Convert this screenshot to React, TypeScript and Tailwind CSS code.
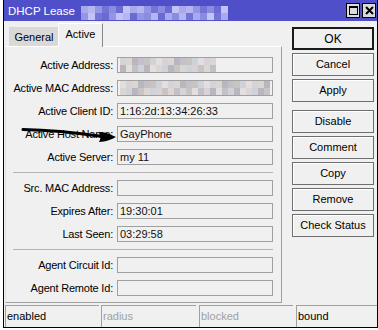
import React from "react";

const titleShades = ["bg-[#8b8be0]", "bg-[#a9a9ee]", "bg-[#7474d6]", "bg-[#c2c2f4]", "bg-[#9595e6]", "bg-[#6a6ad2]", "bg-[#b5b5f0]"];
const grayShades = ["bg-[#d6d2d6]", "bg-[#c4c0c8]", "bg-[#e3dfe0]", "bg-[#b9b6bf]", "bg-[#cfd3d9]", "bg-[#dcd6d2]", "bg-[#c9c4c4]"];

function Pixelate({ shades, cols, rows, size, seed }: { shades: string[]; cols: number; rows: number; size: string; seed: number }) {
  return (
    <div className="flex flex-col">
      {Array.from({ length: rows }).map((_, r) => (
        <div key={r} className="flex">
          {Array.from({ length: cols }).map((_, c) => (
            <div key={c} className={`${size} ${shades[(c * 5 + r * 3 + seed + ((c * r) % 3)) % shades.length]}`} />
          ))}
        </div>
      ))}
    </div>
  );
}

type Row = { label: string; value?: string; blur?: number } | "sep";

const rows: Row[] = [
  { label: "Active Address:", blur: 16 },
  { label: "Active MAC Address:", blur: 25 },
  { label: "Active Client ID:", value: "1:16:2d:13:34:26:33" },
  { label: "Active Host Name:", value: "GayPhone" },
  { label: "Active Server:", value: "my 11" },
  "sep",
  { label: "Src. MAC Address:" },
  { label: "Expires After:", value: "19:30:01" },
  { label: "Last Seen:", value: "03:29:58" },
  "sep",
  { label: "Agent Circuit Id:" },
  { label: "Agent Remote Id:" },
];

const buttons = [
  ["OK"],
  ["Cancel", "Apply"],
  ["Disable", "Comment", "Copy", "Remove", "Check Status"],
];

export default function App() {
  return (
    <div className="relative w-[378px] h-[330px] overflow-hidden bg-white font-['Liberation_Sans',Arial,sans-serif] text-[11px] text-black">
      <div className="ml-[3px] flex h-[328px] w-[375px] flex-col border-x border-b border-black bg-[#f0f0f0]">
        {/* title bar */}
        <div className="flex h-[21px] items-start bg-[#4f4fc9]">
          <span className="pl-[4px] pt-[4px] text-[11.5px] leading-[14px] text-white">DHCP Lease</span>
          <div className="ml-[6px] mt-[6px]">
            <Pixelate shades={titleShades} cols={21} rows={2} size="w-[7px] h-[7px]" seed={1} />
          </div>
          <div className="ml-auto mr-[1px] mt-[3px] flex gap-[2px]">
            <div className="flex h-[15px] w-[14px] items-center justify-center border border-black bg-[#dcdcdc]">
              <div className="h-[9px] w-[9px] border border-t-2 border-black" />
            </div>
            <div className="flex h-[15px] w-[14px] items-center justify-center border border-black bg-[#dcdcdc]">
              <svg width="9" height="9" viewBox="0 0 9 9">
                <path d="M1 1 L8 8 M8 1 L1 8" stroke="#000" strokeWidth="2" />
              </svg>
            </div>
          </div>
        </div>

        <div className="flex h-[284px]">
          {/* tabs + panel */}
          <div className="ml-[1px] flex w-[277px] flex-col">
            <div className="flex h-[25px] items-end pl-[4px]">
              <div className="flex h-[19px] w-[49px] items-center justify-center border-t border-l border-[#d9d9d9] bg-[#d9d9d9] pt-[1px]">
                General
              </div>
              <div className="relative z-10 -mb-px flex h-[24px] w-[45px] items-center justify-center border-t border-l border-r border-t-white border-l-white border-r-[#8a8a8a] bg-[#f0f0f0] pb-[2px]">
                Active
              </div>
            </div>
            <div className="flex h-[257px] flex-col gap-[7px] border border-t-white border-l-[#e3e3e3] border-r-[#a0a0a0] border-b-[#a0a0a0] pt-[10px]">
              {rows.map((row, i) =>
                row === "sep" ? (
                  <div key={i} className="ml-[7px] h-px w-[260px] bg-[#b4b4b4]" />
                ) : (
                  <div key={i} className="flex h-[16px] items-center">
                    <div className="w-[107px] whitespace-nowrap text-right tracking-[-0.2px]">{row.label}</div>
                    <div className="ml-[4px] flex h-[16px] w-[156px] items-center overflow-hidden border border-[#a0a0a0] bg-[#f0f0f0] pl-[2px] text-[#111]">
                      {row.value}
                      {row.blur ? (
                        <Pixelate shades={grayShades} cols={row.blur} rows={2} size="w-[6px] h-[7px]" seed={i * 2} />
                      ) : null}
                    </div>
                  </div>
                )
              )}
            </div>
          </div>

          {/* buttons */}
          <div className="ml-auto mr-[3px] flex w-[82px] flex-col pt-[6px]">
            {buttons.map((group, g) => (
              <div key={g} className={`flex flex-col gap-[3px] ${g === 0 ? "" : g === 1 ? "mt-[3px]" : "mt-[8px]"}`}>
                {group.map((b) => (
                  <div
                    key={b}
                    className={`flex h-[23px] items-center justify-center bg-[#f0f0f0] ${
                      b === "OK" ? "border-2 border-[#1a1a1a] text-[12px]" : "border border-[#6e6e6e] shadow-[inset_1px_1px_0_#ffffff]"
                    }`}
                  >
                    {b}
                  </div>
                ))}
              </div>
            ))}
          </div>
        </div>

        {/* status bar */}
        <div className="ml-[1px] flex h-[22px]">
          <div className="flex w-[94px] items-center border-t border-l border-[#a0a0a0] pl-[1px]">enabled</div>
          <div className="ml-[2px] flex w-[95px] items-center border-t border-l border-[#a0a0a0] pl-[1px] text-[#a0a0a0]">radius</div>
          <div className="ml-[3px] flex w-[94px] items-center border-t border-l border-[#a0a0a0] pl-[1px] text-[#a0a0a0]">blocked</div>
          <div className="ml-[3px] flex flex-1 items-center border-t border-l border-[#a0a0a0] pl-[1px]">bound</div>
        </div>
      </div>

      {/* hand-drawn arrow */}
      <svg className="pointer-events-none absolute left-0 top-0" width="378" height="330">
        <path d="M23 129.5 C48 130 78 133 103 136.5" stroke="#000" strokeWidth="3" fill="none" strokeLinecap="round" />
        <path d="M99 132 C106 132 112 135 116 137 C112 139 106 142 99 142 C101 139 101 135 99 132 Z" fill="#000" />
      </svg>
    </div>
  );
}
